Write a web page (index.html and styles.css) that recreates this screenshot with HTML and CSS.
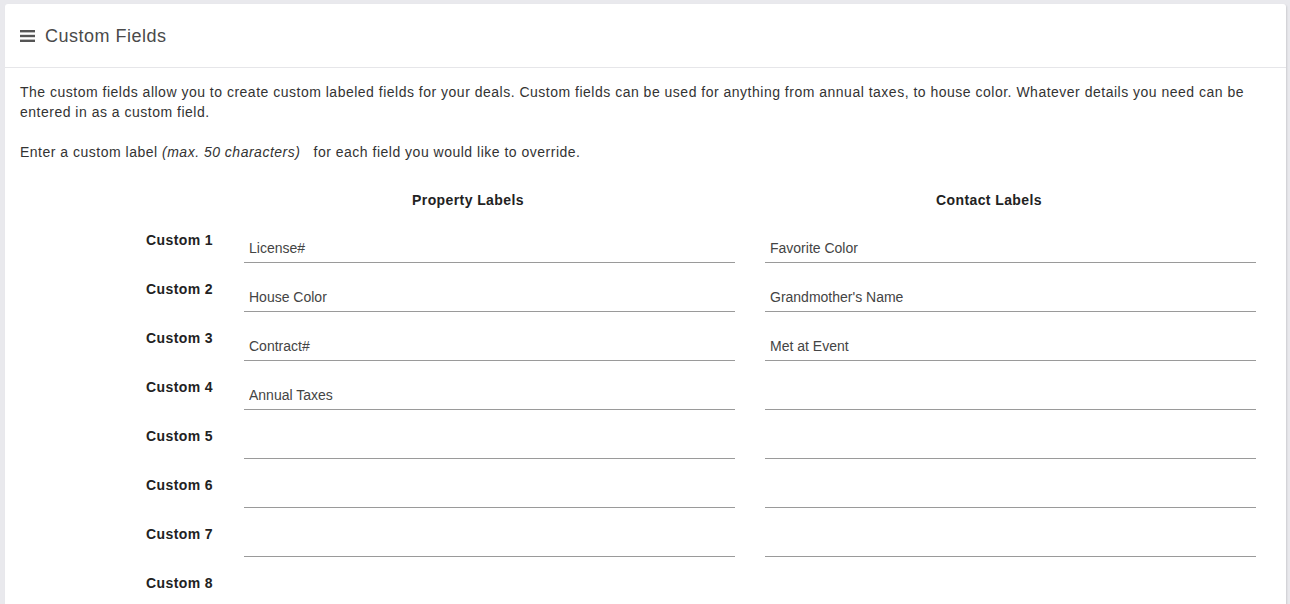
FILE: index.html
```html
<!DOCTYPE html>
<html lang="en">
<head>
    <meta charset="UTF-8">
    <meta name="viewport" content="width=device-width, initial-scale=1.0">
    <title>Custom Fields</title>
    <link rel="stylesheet" href="styles.css">
</head>
<body>
    <div class="panel">
        <!-- header -->
        <div class="panel-heading">
            <svg class="menu-icon" width="15" height="12" viewBox="0 0 15 12">
                <rect x="0" y="0" width="15" height="2.4"/>
                <rect x="0" y="4.8" width="15" height="2.4"/>
                <rect x="0" y="9.6" width="15" height="2.4"/>
            </svg>
            <span class="panel-title">Custom Fields</span>
        </div>

        <div class="panel-body">
            <p>The custom fields allow you to create custom labeled fields for your deals. Custom fields can be used for anything from annual taxes, to house color. Whatever details you need can be entered in as a custom field.</p>
            <p>Enter a custom label <em>(max. 50 characters)</em> &nbsp; for each field you would like to override.</p>

            <div class="fields-grid">
                <div></div>
                <div class="col-title">Property Labels</div>
                <div class="col-title">Contact Labels</div>

                <label class="field-label">Custom 1</label>
                <input class="field-input" type="text" value="License#">
                <input class="field-input" type="text" value="Favorite Color">

                <label class="field-label">Custom 2</label>
                <input class="field-input" type="text" value="House Color">
                <input class="field-input" type="text" value="Grandmother's Name">

                <label class="field-label">Custom 3</label>
                <input class="field-input" type="text" value="Contract#">
                <input class="field-input" type="text" value="Met at Event">

                <label class="field-label">Custom 4</label>
                <input class="field-input" type="text" value="Annual Taxes">
                <input class="field-input" type="text" value="">

                <label class="field-label">Custom 5</label>
                <input class="field-input" type="text" value="">
                <input class="field-input" type="text" value="">

                <label class="field-label">Custom 6</label>
                <input class="field-input" type="text" value="">
                <input class="field-input" type="text" value="">

                <label class="field-label">Custom 7</label>
                <input class="field-input" type="text" value="">
                <input class="field-input" type="text" value="">

                <label class="field-label">Custom 8</label>
                <input class="field-input" type="text" value="">
                <input class="field-input" type="text" value="">
            </div>
        </div>
    </div>
</body>
</html>
```

FILE: styles.css
```css
body {
    margin: 0;
    padding: 4px 4px 0 5px;
    background: #e9e9ed;
    font-family: 'Liberation Sans', Arial, sans-serif;
    font-size: 14px;
    line-height: 20px;
    letter-spacing: 0.4px;
    color: #333;
}

.panel {
    background: #fff;
    border-radius: 3px;
    box-shadow: 1px 1px 2px rgba(0, 0, 0, 0.12);
    min-height: 620px;
}

.panel-heading {
    display: flex;
    align-items: center;
    height: 63px;
    padding: 0 15px;
    border-bottom: 1px solid #e6e6e9;
}

.menu-icon {
    fill: #555;
    margin-right: 10px;
}

.panel-title {
    font-size: 18px;
    letter-spacing: 0.5px;
    color: #4a4a4a;
}

.panel-body {
    padding: 14px 15px 0;
}

.panel-body p {
    margin: 0 0 20px;
    letter-spacing: 0.5px;
}

.panel-body em {
    font-style: italic;
}

.fields-grid {
    display: grid;
    grid-template-columns: 68px 491px 491px;
    column-gap: 30px;
    margin: 28px 0 0 126px;
}

.col-title {
    font-weight: bold;
    color: #222;
    text-align: center;
    padding-right: 43px;
    margin-bottom: 19px;
}

.field-label {
    font-weight: bold;
    color: #222;
    padding-top: 1px;
    white-space: nowrap;
}

.field-input {
    box-sizing: border-box;
    height: 34px;
    margin-bottom: 15px;
    padding: 9px 5px 5px;
    border: 0;
    border-bottom: 1px solid #9a9a9a;
    font-family: 'Liberation Sans', Arial, sans-serif;
    font-size: 14px;
    letter-spacing: 0;
    color: #444;
    background: transparent;
    outline: none;
}
```
